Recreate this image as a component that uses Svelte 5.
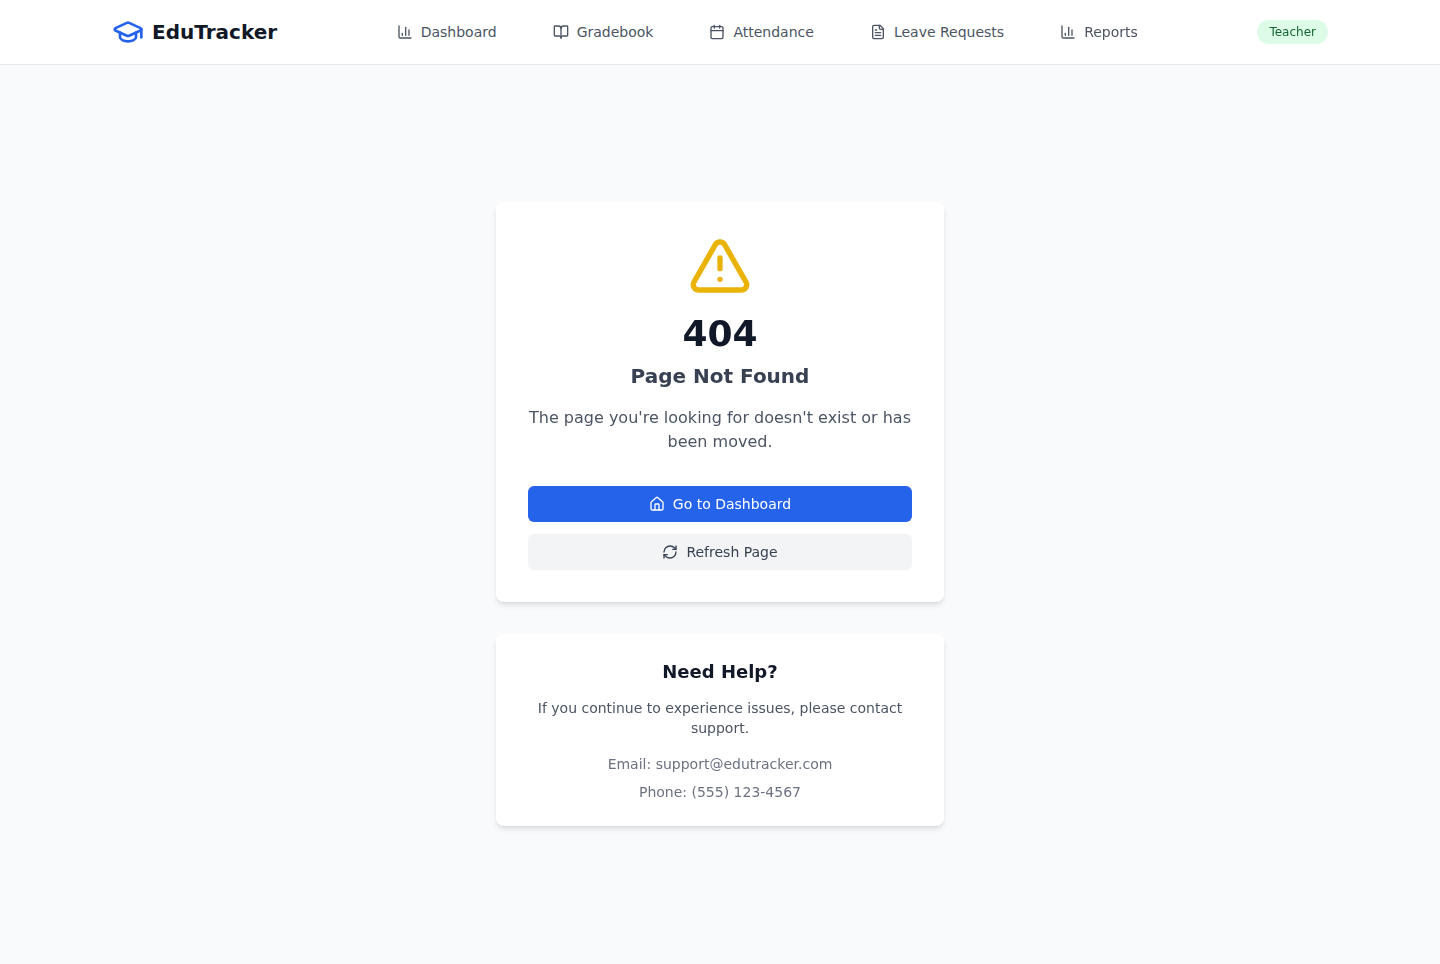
<script>
  const icons = {
    chart: ['M3 3v16a2 2 0 0 0 2 2h16', 'M18 17V9', 'M13 17V5', 'M8 17v-3'],
    book: [
      'M12 7v14',
      'M3 18a1 1 0 0 1-1-1V4a1 1 0 0 1 1-1h5a4 4 0 0 1 4 4 4 4 0 0 1 4-4h5a1 1 0 0 1 1 1v13a1 1 0 0 1-1 1h-6a3 3 0 0 0-3 3 3 3 0 0 0-3-3z'
    ],
    calendar: ['M8 2v4', 'M16 2v4', 'M5 4h14a2 2 0 0 1 2 2v14a2 2 0 0 1-2 2H5a2 2 0 0 1-2-2V6a2 2 0 0 1 2-2z', 'M3 10h18'],
    file: [
      'M15 2H6a2 2 0 0 0-2 2v16a2 2 0 0 0 2 2h12a2 2 0 0 0 2-2V7Z',
      'M14 2v4a2 2 0 0 0 2 2h4',
      'M10 9H8',
      'M16 13H8',
      'M16 17H8'
    ],
    home: [
      'M15 21v-8a1 1 0 0 0-1-1h-4a1 1 0 0 0-1 1v8',
      'M3 10a2 2 0 0 1 .709-1.528l7-5.999a2 2 0 0 1 2.582 0l7 5.999A2 2 0 0 1 21 10v9a2 2 0 0 1-2 2H5a2 2 0 0 1-2-2z'
    ],
    refresh: [
      'M3 12a9 9 0 0 1 9-9 9.75 9.75 0 0 1 6.74 2.74L21 8',
      'M21 3v5h-5',
      'M21 12a9 9 0 0 1-9 9 9.75 9.75 0 0 1-6.74-2.74L3 16',
      'M8 16H3v5'
    ],
    alert: ['m21.73 18-8-14a2 2 0 0 0-3.48 0l-8 14A2 2 0 0 0 4 21h16a2 2 0 0 0 1.73-3', 'M12 9v4', 'M12 17h.01'],
    cap: [
      'M21.42 10.922a1 1 0 0 0-.019-1.838L12.83 5.18a2 2 0 0 0-1.66 0L2.6 9.08a1 1 0 0 0 0 1.832l8.57 3.908a2 2 0 0 0 1.66 0z',
      'M22 10v6',
      'M6 12.5V16a6 3 0 0 0 12 0v-3.5'
    ]
  };

  const navItems = [
    { label: 'Dashboard', icon: 'chart' },
    { label: 'Gradebook', icon: 'book' },
    { label: 'Attendance', icon: 'calendar' },
    { label: 'Leave Requests', icon: 'file' },
    { label: 'Reports', icon: 'chart' }
  ];
</script>

{#snippet icon(name, size)}
  <svg width={size} height={size} viewBox="0 0 24 24" fill="none" stroke="currentColor" stroke-width="2" stroke-linecap="round" stroke-linejoin="round">
    {#each icons[name] as d}
      <path {d} />
    {/each}
  </svg>
{/snippet}

<div class="page">
  <header>
    <div class="bar">
      <a class="logo" href="#top">
        <span class="cap">{@render icon('cap', 32)}</span>
        <span>EduTracker</span>
      </a>
      <nav>
        {#each navItems as item}
          <a class="navlink" href="#top">
            {@render icon(item.icon, 16)}
            <span>{item.label}</span>
          </a>
        {/each}
      </nav>
      <span class="badge">Teacher</span>
    </div>
  </header>

  <main>
    <div class="column">
      <section class="card error">
        <div class="warn">{@render icon('alert', 64)}</div>
        <h1>404</h1>
        <h2>Page Not Found</h2>
        <p class="lead">The page you're looking for doesn't exist or has been moved.</p>
        <div class="actions">
          <button class="primary">{@render icon('home', 16)}<span>Go to Dashboard</span></button>
          <button class="secondary">{@render icon('refresh', 16)}<span>Refresh Page</span></button>
        </div>
      </section>

      <section class="card help">
        <h3>Need Help?</h3>
        <p class="note">If you continue to experience issues, please contact support.</p>
        <div class="contact">
          <p>Email: support@edutracker.com</p>
          <p>Phone: (555) 123-4567</p>
        </div>
      </section>
    </div>
  </main>
</div>

<style>
  :global(body) {
    margin: 0;
    background: #f9fafb;
    font-family: "DejaVu Sans", sans-serif;
  }
  .page {
    min-height: 100vh;
    display: flex;
    flex-direction: column;
    will-change: opacity;
  }
  header {
    background: #fff;
    border-bottom: 1px solid #e5e7eb;
  }
  .bar {
    box-sizing: border-box;
    max-width: 1280px;
    height: 64px;
    margin: 0 auto;
    padding: 0 32px;
    display: flex;
    align-items: center;
    justify-content: space-between;
  }
  .logo {
    display: flex;
    align-items: center;
    gap: 8px;
    font-size: 20px;
    line-height: 28px;
    font-weight: 700;
    color: #111827;
    text-decoration: none;
  }
  .cap {
    display: flex;
    color: #2563eb;
  }
  nav {
    display: flex;
    gap: 32px;
  }
  .navlink {
    display: flex;
    align-items: center;
    gap: 8px;
    padding: 8px 12px;
    font-size: 14px;
    line-height: 20px;
    color: #4b5563;
    text-decoration: none;
  }
  .badge {
    padding: 4px 12px;
    border-radius: 9999px;
    background: #dcfce7;
    color: #166534;
    font-size: 12px;
    line-height: 16px;
  }
  main {
    flex: 1;
    display: flex;
    align-items: center;
    justify-content: center;
    padding-bottom: 1px;
  }
  .column {
    width: 448px;
    display: flex;
    flex-direction: column;
    gap: 32px;
  }
  .card {
    background: #fff;
    border-radius: 8px;
    box-shadow: 0 4px 6px -1px rgba(0, 0, 0, 0.1), 0 2px 4px -2px rgba(0, 0, 0, 0.1);
    text-align: center;
  }
  .error {
    padding: 32px;
  }
  .help {
    padding: 24px;
  }
  .warn {
    display: flex;
    justify-content: center;
    color: #eab308;
    margin-bottom: 16px;
  }
  h1 {
    margin: 0 0 8px;
    font-size: 36px;
    line-height: 40px;
    font-weight: 700;
    color: #111827;
  }
  h2 {
    margin: 0 0 16px;
    font-size: 20px;
    line-height: 28px;
    font-weight: 600;
    color: #374151;
  }
  .lead {
    margin: 0 0 32px;
    font-size: 16px;
    line-height: 24px;
    color: #4b5563;
  }
  .actions {
    display: flex;
    flex-direction: column;
    gap: 12px;
  }
  button {
    height: 36px;
    border: 0;
    border-radius: 6px;
    display: flex;
    align-items: center;
    justify-content: center;
    gap: 8px;
    font-family: inherit;
    font-size: 14px;
    line-height: 20px;
  }
  .primary {
    background: #2563eb;
    color: #fff;
  }
  .secondary {
    background: #f3f4f6;
    color: #374151;
  }
  h3 {
    margin: 0 0 12px;
    font-size: 18px;
    line-height: 28px;
    font-weight: 600;
    color: #111827;
  }
  .note {
    margin: 0 0 16px;
    font-size: 14px;
    line-height: 20px;
    color: #4b5563;
  }
  .contact {
    display: flex;
    flex-direction: column;
    gap: 8px;
    font-size: 14px;
    line-height: 20px;
    color: #6b7280;
  }
  .contact p {
    margin: 0;
  }
</style>
